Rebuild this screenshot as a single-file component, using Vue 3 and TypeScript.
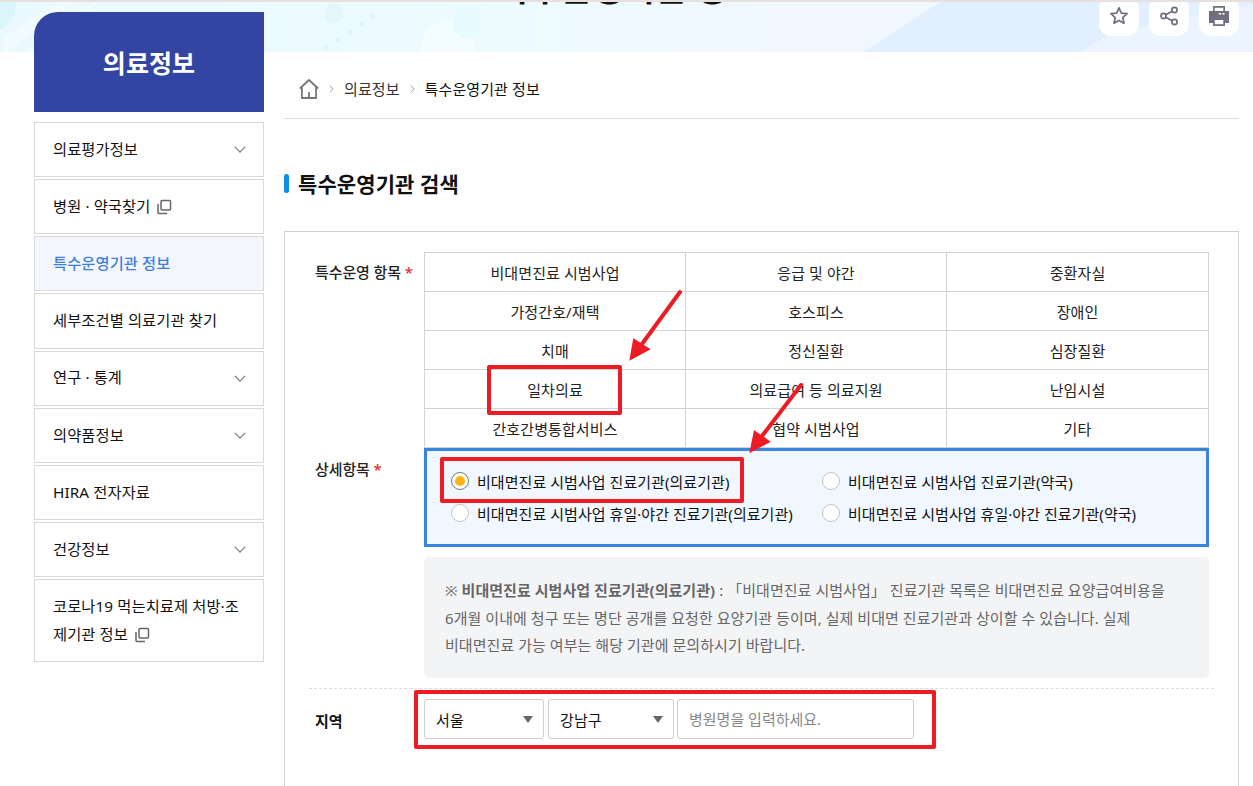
<script setup lang="ts">
interface NavItem { label: string; chevron?: boolean; ext?: boolean; active?: boolean; tall?: boolean }
const nav: NavItem[] = [
  { label: '의료평가정보', chevron: true },
  { label: '병원 · 약국찾기', ext: true },
  { label: '특수운영기관 정보', active: true },
  { label: '세부조건별 의료기관 찾기' },
  { label: '연구 · 통계', chevron: true },
  { label: '의약품정보', chevron: true },
  { label: 'HIRA 전자자료' },
  { label: '건강정보', chevron: true },
  { label: '코로나19 먹는치료제 처방·조제기관 정보', ext: true, tall: true },
]
const cells: string[] = [
  '비대면진료 시범사업', '응급 및 야간', '중환자실',
  '가정간호/재택', '호스피스', '장애인',
  '치매', '정신질환', '심장질환',
  '일차의료', '의료급여 등 의료지원', '난임시설',
  '간호간병통합서비스', '협약 시범사업', '기타',
]
const radios = [
  { label: '비대면진료 시범사업 진료기관(의료기관)', on: true },
  { label: '비대면진료 시범사업 진료기관(약국)', on: false },
  { label: '비대면진료 시범사업 휴일·야간 진료기관(의료기관)', on: false },
  { label: '비대면진료 시범사업 휴일·야간 진료기관(약국)', on: false },
]
</script>

<template>
  <div class="page">
    <header class="band">
      <svg class="band-art" viewBox="0 0 1253 50" width="1253" height="50" aria-hidden="true">
        <polygon points="0,0 16,0 14,14 4,26 0,27" fill="#d9f6fb" />
        <polygon points="4,34 62,0 76,0 6,50 4,50" fill="#f2fcff" />
        <polygon points="24,50 92,0 100,0 36,50" fill="#f2fcff" />
        <circle cx="334" cy="11" r="9.5" fill="#e2f6fb" />
        <circle cx="373" cy="14.500" r="2.400" fill="#dff4fa" />
        <circle cx="361.500" cy="22" r="2.400" fill="#dff4fa" />
        <circle cx="349.500" cy="30" r="2.400" fill="#dff4fa" />
        <circle cx="337.500" cy="37.500" r="2.400" fill="#dff4fa" />
        <circle cx="325.500" cy="45.500" r="2.400" fill="#dff4fa" />
        <ellipse cx="447.500" cy="51" rx="27.500" ry="33" fill="#f3fdff" />
        <polygon points="466,2 479,9.500 479,29 466,37 453,29 453,9.500" fill="#e6fbfe" />
        <polygon points="863,50 940,0 1253,0 1253,50" fill="#e1efff" />
        <polygon points="863,50 900,26 940,0 760,0 760,50" fill="#f1f7ff" />
        <polygon points="1080,50 1110,32 1253,2 1253,50" fill="#ecf4ff" />
      </svg>
      <h2 class="band-title">특수운영기관 정보</h2>
      <div class="tools">
        <button class="tool" aria-label="즐겨찾기">
          <svg viewBox="0 0 20 20" width="20" height="20"><path d="M10 1.800l2.400 5.300 5.700.6-4.300 3.900 1.200 5.700-5-2.900-5 2.900 1.200-5.700-4.300-3.900 5.700-.6z" fill="none" stroke="#6f6f80" stroke-width="1.700" stroke-linejoin="round" /></svg>
        </button>
        <button class="tool" aria-label="공유">
          <svg class="up" viewBox="0 0 20 20" width="20" height="20" fill="none" stroke="#6f6f80" stroke-width="1.700"><circle cx="15.500" cy="4" r="2.600" /><circle cx="4.500" cy="10" r="2.600" /><circle cx="15.500" cy="16" r="2.600" /><path d="M6.800 8.700l6.400-3.400M6.800 11.300l6.400 3.400" /></svg>
        </button>
        <button class="tool" aria-label="인쇄">
          <svg class="up" viewBox="0 0 20 20" width="20" height="20"><path d="M4 0h12v5h4v12h-4v3H4v-3H0V5h4zM5.700 1.700V5h8.600V1.700zM5.700 14v4.300h8.600V14zM9.700 7v1.600h2.300V7zM13.300 7v1.600h2.300V7z" fill="#6f6f80" fill-rule="evenodd" /></svg>
        </button>
      </div>
    </header>

    <div class="layout">
      <aside class="side">
        <div class="side-title">의료정보</div>
        <ul class="nav">
          <li v-for="n in nav" :key="n.label" class="nav-item" :class="{ active: n.active, tall: n.tall }">
            <span class="nav-text">{{ n.label }}<svg v-if="n.ext" class="ext" viewBox="0 0 16 16" width="16" height="16" fill="none" stroke="#666" stroke-width="1.500"><rect x="5" y="1.500" width="9.500" height="9.500" rx="1" /><path d="M2 5v8.500a1 1 0 0 0 1 1h8" /></svg></span>
            <svg v-if="n.chevron" class="chev" viewBox="0 0 14 8" width="12" height="7" fill="none" stroke="#777" stroke-width="1.400"><path d="M1 1l6 6 6-6" /></svg>
          </li>
        </ul>
      </aside>

      <main class="main">
        <nav class="crumbs">
          <svg viewBox="0 0 20 20" width="20" height="20" fill="none" stroke="#777" stroke-width="1.800" stroke-linejoin="round"><path d="M.8 9.500L10 1l9.200 8.500M2.900 8v11h14.200V8M10 19v-6" /></svg>
          <svg class="sep" viewBox="0 0 6 10" width="5" height="10" fill="none" stroke="#888" stroke-width="1"><path d="M1 1l4 4-4 4" /></svg>
          <span>의료정보</span>
          <svg class="sep" viewBox="0 0 6 10" width="5" height="10" fill="none" stroke="#888" stroke-width="1"><path d="M1 1l4 4-4 4" /></svg>
          <span class="here">특수운영기관 정보</span>
        </nav>

        <h3 class="heading">특수운영기관 검색</h3>

        <section class="card">
          <div class="row">
            <div class="label">특수운영 항목 <em>*</em></div>
            <div class="grid">
              <div v-for="c in cells" :key="c" class="cell">{{ c }}</div>
            </div>
          </div>
          <div class="row row-detail">
            <div class="label label-detail">상세항목 <em>*</em></div>
            <div class="detail-col">
              <div class="detail">
                <label v-for="r in radios" :key="r.label" class="radio">
                  <span class="dot" :class="{ on: r.on }"></span>{{ r.label }}
                </label>
              </div>
              <div class="note">
                ※ <b>비대면진료 시범사업 진료기관(의료기관)</b> : 「비대면진료 시범사업」 진료기관 목록은 비대면진료 요양급여비용을 6개월 이내에 청구 또는 명단 공개를 요청한 요양기관 등이며, 실제 비대면 진료기관과 상이할 수 있습니다. 실제 비대면진료 가능 여부는 해당 기관에 문의하시기 바랍니다.
              </div>
            </div>
          </div>
          <div class="row row-region">
            <div class="label label-region">지역</div>
            <div class="fields">
              <div class="sel sel-a">서울</div>
              <div class="sel sel-b">강남구</div>
              <input class="inp" type="text" placeholder="병원명을 입력하세요." />
            </div>
          </div>
        </section>
      </main>
    </div>

    <div class="mark mark-1"></div>
    <div class="mark mark-2"></div>
    <div class="mark mark-3"></div>
    <svg class="arrows" viewBox="0 0 1253 786" width="1253" height="786" aria-hidden="true">
      <path d="M680 292L642 344M801 385L762 436" stroke="#ed1c24" stroke-width="4" stroke-linecap="round" fill="none" />
      <polygon points="629.300,360.700 633.300,338.300 650.700,349.300" fill="#ed1c24" />
      <polygon points="749.300,453.300 754,430 770.700,441.700" fill="#ed1c24" />
    </svg>
  </div>
</template>

<style scoped>
* { box-sizing: border-box; }
.page {
  position: relative;
  width: 1253px;
  height: 786px;
  overflow: hidden;
  background: #fff;
  color: #111;
  font-family: "Noto Sans", "Noto Sans CJK KR", sans-serif;
  font-size: 15px;
  letter-spacing: 0.1px;
}
.band {
  position: relative;
  height: 52px;
  border-top: 2px solid #e6e1df;
  overflow: hidden;
  display: flex;
  justify-content: flex-end;
  padding-right: 14px;
  background: linear-gradient(90deg, #e9f9fd 0%, #edfbff 40%, #f1f8ff 65%, #e8f3ff 100%);
}
.band-art { position: absolute; left: 0; top: 0; }
.band-title {
  position: absolute;
  left: 498px;
  top: -33px;
  margin: 0;
  font-size: 34px;
  line-height: 38px;
  font-weight: 700;
  white-space: nowrap;
  color: #111;
}
.tools { position: relative; display: flex; gap: 10px; margin-top: -6px; }
.tool {
  width: 40px;
  height: 40px;
  border: 0;
  padding: 0;
  border-radius: 12px;
  background: #fff;
  display: flex;
  align-items: center;
  justify-content: center;
}
.tool svg.up { margin-top: -1px; }
.layout {
  position: relative;
  display: flex;
  gap: 20px;
  padding: 0 14px 0 34px;
  margin-top: -40px;
}
.side { width: 230px; flex: none; }
.side-title {
  height: 100px;
  background: #3345a3;
  border-top-left-radius: 24px;
  color: #fff;
  font-size: 25px;
  font-weight: 700;
  display: flex;
  align-items: center;
  justify-content: center;
}
.nav { list-style: none; margin: 10px 0 0; padding: 0; display: flex; flex-direction: column; gap: 2px; }
.nav-item {
  height: 55.150px;
  border: 1px solid #d9d9d9;
  padding: 0 17px 0 18px;
  display: flex;
  align-items: center;
  justify-content: space-between;
  font-size: 15.300px;
  line-height: 27.500px;
  font-weight: 400;
  background: #fff;
}
.nav-item.tall { height: 83px; }
.nav-item.active { background: #f3f6fc; color: #3f7fdc; font-weight: 500; }
.ext { vertical-align: -3px; margin-left: 6px; }
.chev { flex: none; }
.main { flex: 1; min-width: 0; margin-top: 40px; }
.crumbs {
  height: 67px;
  border-bottom: 1px solid #dcdcdc;
  padding: 7px 0 0 15px;
  display: flex;
  align-items: center;
  gap: 10px;
  color: #333;
}
.here { color: #111; }
.heading {
  position: relative;
  margin: 50px 0 0;
  padding-left: 14px;
  font-size: 21px;
  font-weight: 700;
  line-height: 31px;
  color: #111;
}
.heading::before {
  content: "";
  position: absolute;
  left: 0;
  top: 5px;
  width: 5px;
  height: 19px;
  border-radius: 3px;
  background: #0b8ee6;
}
.card {
  margin-top: 31px;
  border: 1px solid #d0d0d0;
  padding: 20px 24px 60px;
  min-height: 640px;
}
.row { display: flex; padding: 0 5px; }
.label {
  width: 110px;
  flex: none;
  padding: 9px 0 0 1px;
  font-weight: 500;
  line-height: 22px;
  letter-spacing: -0.1px;
  color: #222;
}
.label em { color: #e0312f; font-style: normal; }
.label-detail { padding-top: 10px; }
.label-region { padding-top: 11px; color: #111; font-weight: 700; }
.grid {
  flex: 1;
  display: grid;
  grid-template-columns: 261px 261px 262px;
  border-top: 1px solid #d3d3d3;
  border-left: 1px solid #d3d3d3;
}
.cell {
  height: 39px;
  border-right: 1px solid #d3d3d3;
  border-bottom: 1px solid #d3d3d3;
  display: flex;
  align-items: center;
  justify-content: center;
  color: #222;
}
.detail-col { flex: 1; min-width: 0; }
.detail {
  height: 99px;
  border: 3px solid #3a84dd;
  background: #f0f7ff;
  padding: 14px 0 0 24px;
  display: grid;
  grid-template-columns: 371px 1fr;
  grid-auto-rows: 32px;
}
.radio { display: flex; align-items: center; gap: 8px; color: #111; font-weight: 400; white-space: nowrap; letter-spacing: 0.05px; }
.dot {
  flex: none;
  width: 18px;
  height: 18px;
  border-radius: 50%;
  border: 1px solid #c4c4c4;
  background: #fff;
  position: relative;
}
.dot.on { border-color: #777; }
.dot.on::after {
  content: "";
  position: absolute;
  inset: 3px;
  border-radius: 50%;
  background: #fdb515;
}
.note {
  margin-top: 10px;
  height: 121px;
  background: #f3f4f6;
  border-radius: 5px;
  padding: 20px 32px 19px 21px;
  color: #666;
  line-height: 27.500px;
  letter-spacing: 0.05px;
  word-break: keep-all;
}
.note b { font-weight: 700; color: #666; }
.row-detail { padding-bottom: 10px; border-bottom: 1px dashed #dcdcdc; }
.row-region { padding-top: 10px; }
.fields { display: flex; gap: 4px; }
.sel {
  position: relative;
  height: 40px;
  border: 1px solid #cfcfcf;
  border-radius: 3px;
  padding-left: 11px;
  display: flex;
  align-items: center;
  background: #fff;
  color: #111;
}
.sel::after {
  content: "";
  position: absolute;
  right: 10px;
  top: 16px;
  border-left: 5px solid transparent;
  border-right: 5px solid transparent;
  border-top: 7px solid #666;
}
.sel-a { width: 120px; }
.sel-b { width: 126px; }
.inp {
  width: 237px;
  height: 40px;
  margin-left: -1px;
  border: 1px solid #cfcfcf;
  border-radius: 3px;
  padding: 0 11px;
  font: inherit;
  outline: none;
}
.inp::placeholder { color: #888; opacity: 1; }
.mark {
  position: absolute;
  border: 4px solid #ed1c24;
  border-radius: 2px;
}
.mark-1 { left: 487px; top: 365px; width: 135px; height: 50px; }
.mark-2 { left: 440px; top: 457px; width: 304px; height: 46px; }
.mark-3 { left: 414px; top: 690px; width: 522px; height: 59px; }
.arrows { position: absolute; left: 0; top: 0; pointer-events: none; }
</style>
